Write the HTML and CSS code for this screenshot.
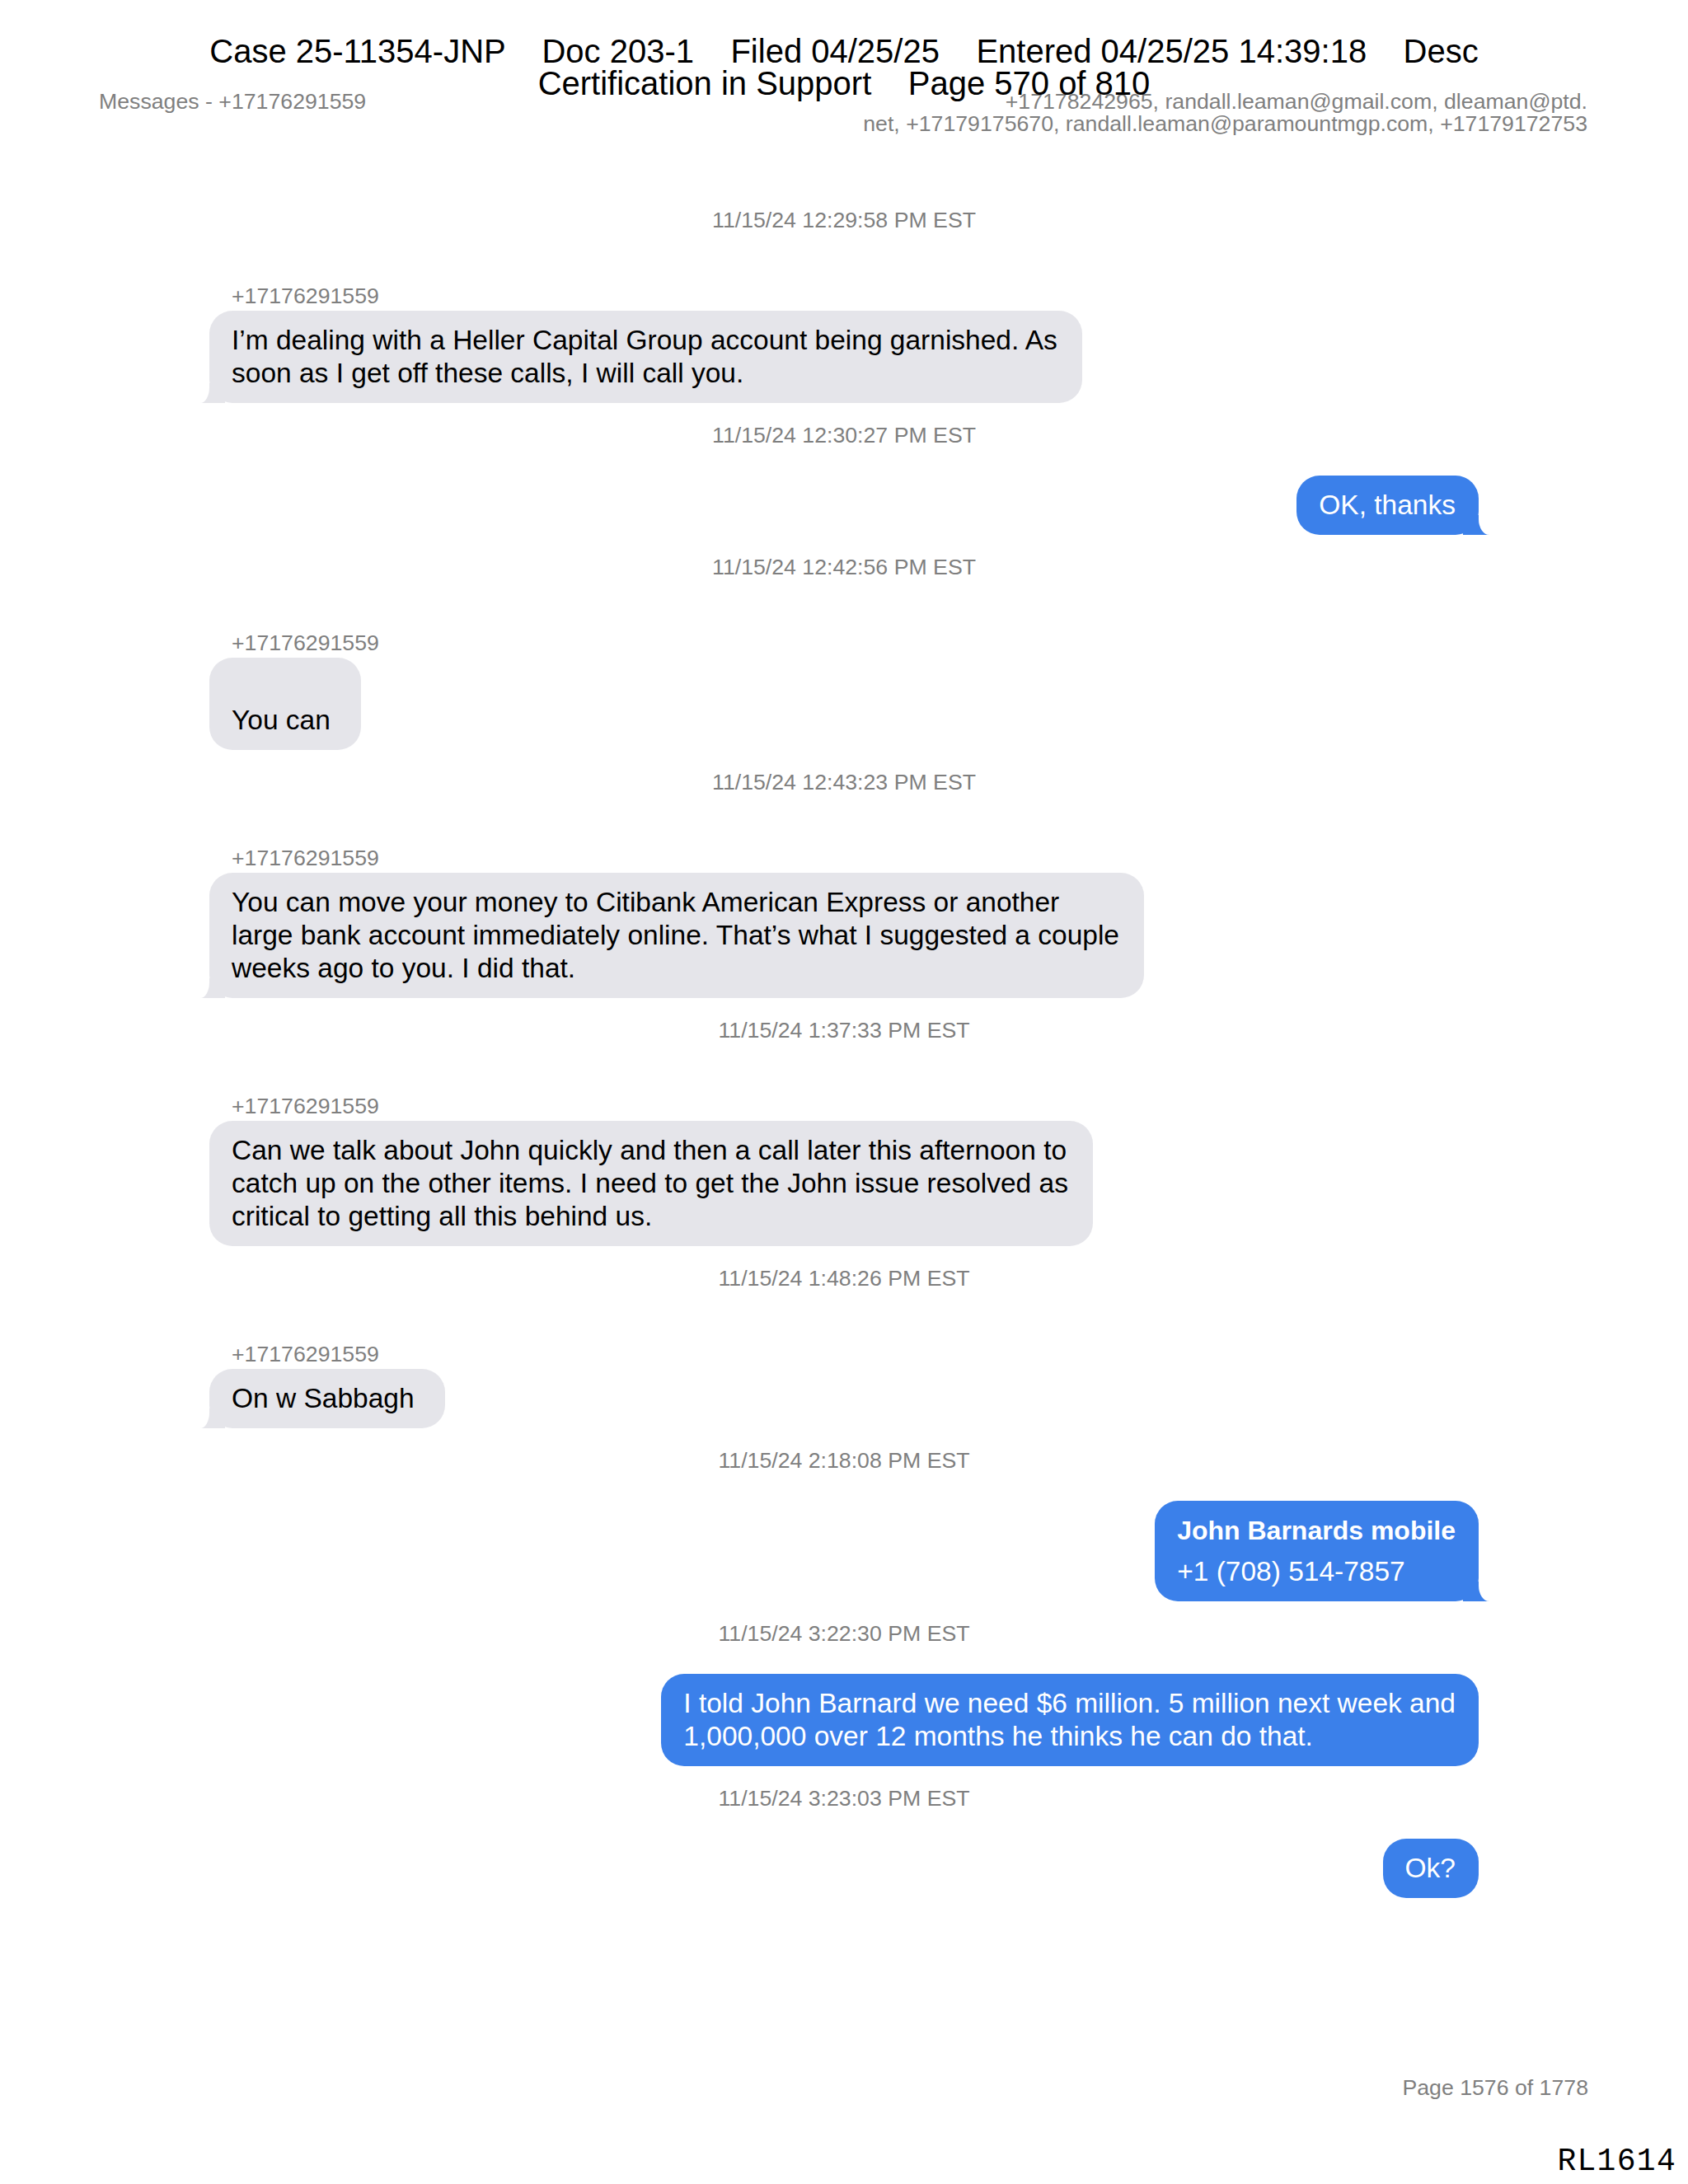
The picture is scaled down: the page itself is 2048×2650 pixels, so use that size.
FILE: index.html
```html
<!DOCTYPE html>
<html lang="en">
<head>
<meta charset="utf-8">
<title>Messages - +17176291559</title>
<link rel="stylesheet" href="styles.css">
</head>
<body>
<div class="page">
  <div class="stamp">
    <div class="stamp-line">Case 25-11354-JNP    Doc 203-1    Filed 04/25/25    Entered 04/25/25 14:39:18    Desc</div>
    <div class="stamp-line">Certification in Support    Page 570 of 810</div>
  </div>

  <header class="doc-header">
    <div class="doc-title">Messages - +17176291559</div>
    <div class="participants">+17178242965, randall.leaman@gmail.com, dleaman@ptd.<br>net, +17179175670, randall.leaman@paramountmgp.com, +17179172753</div>
  </header>

  <main class="thread">
    <div class="ts">11/15/24 12:29:58 PM EST</div>
    <div class="msg in">
      <div class="sender">+17176291559</div>
      <div class="bubble tail">I’m dealing with a Heller Capital Group account being garnished. As<br>soon as I get off these calls, I will call you.</div>
    </div>

    <div class="ts">11/15/24 12:30:27 PM EST</div>
    <div class="msg out">
      <div class="bubble tail">OK, thanks</div>
    </div>

    <div class="ts">11/15/24 12:42:56 PM EST</div>
    <div class="msg in">
      <div class="sender">+17176291559</div>
      <div class="bubble wide-pad">&nbsp;<br>You can</div>
    </div>

    <div class="ts">11/15/24 12:43:23 PM EST</div>
    <div class="msg in">
      <div class="sender">+17176291559</div>
      <div class="bubble tail">You can move your money to Citibank American Express or another<br>large bank account immediately online. That’s what I suggested a couple<br>weeks ago to you. I did that.</div>
    </div>

    <div class="ts">11/15/24 1:37:33 PM EST</div>
    <div class="msg in">
      <div class="sender">+17176291559</div>
      <div class="bubble">Can we talk about John quickly and then a call later this afternoon to<br>catch up on the other items. I need to get the John issue resolved as<br>critical to getting all this behind us.</div>
    </div>

    <div class="ts">11/15/24 1:48:26 PM EST</div>
    <div class="msg in">
      <div class="sender">+17176291559</div>
      <div class="bubble tail wide-pad">On w Sabbagh</div>
    </div>

    <div class="ts">11/15/24 2:18:08 PM EST</div>
    <div class="msg out">
      <div class="bubble tail contact">
        <div class="contact-name">John Barnards mobile</div>
        <div class="contact-phone">+1 (708) 514-7857</div>
      </div>
    </div>

    <div class="ts">11/15/24 3:22:30 PM EST</div>
    <div class="msg out">
      <div class="bubble">I told John Barnard we need $6 million. 5 million next week and<br>1,000,000 over 12 months he thinks he can do that.</div>
    </div>

    <div class="ts">11/15/24 3:23:03 PM EST</div>
    <div class="msg out">
      <div class="bubble">Ok?</div>
    </div>
  </main>

  <footer class="page-foot">
    <div class="pageno">Page 1576 of 1778</div>
    <div class="bates">RL1614</div>
  </footer>
</div>
</body>
</html>
```

FILE: styles.css
```css
* {
  box-sizing: border-box;
}

html, body {
  margin: 0;
  padding: 0;
  background: #ffffff;
}

body {
  font-family: "Liberation Sans", Arial, sans-serif;
  color: #000000;
}

.page {
  position: relative;
  width: 2048px;
  height: 2650px;
  display: flex;
  flex-direction: column;
  overflow: hidden;
}

/* Court filing stamp laid over the page */
.stamp {
  position: absolute;
  top: 43px;
  left: 0;
  width: 100%;
  z-index: 5;
  text-align: center;
  font-size: 40px;
  line-height: 39px;
  color: #000000;
}

.stamp-line {
  white-space: pre;
}

/* Export header */
.doc-header {
  display: flex;
  justify-content: space-between;
  align-items: flex-start;
  padding: 110px 122px 0 120px;
  font-size: 26.7px;
  line-height: 27px;
  color: #7f7f7f;
}

.participants {
  text-align: right;
  white-space: nowrap;
}

/* Conversation */
.thread {
  flex: 1;
  display: flex;
  flex-direction: column;
  padding: 63.5px 254px 0;
}

.ts {
  margin-top: 24px;
  text-align: center;
  font-size: 26.7px;
  line-height: 31px;
  color: #7f7f7f;
}

.msg {
  display: flex;
  flex-direction: column;
}

.msg.in {
  align-self: flex-start;
  margin-top: 61px;
}

.msg.out {
  align-self: flex-end;
  align-items: flex-end;
  margin-top: 33px;
}

.sender {
  padding-left: 27px;
  margin-bottom: 2px;
  font-size: 26.7px;
  line-height: 31px;
  color: #7f7f7f;
  white-space: nowrap;
}

.bubble {
  position: relative;
  z-index: 0;
  width: fit-content;
  border-radius: 28px;
  padding: 16px 28px 16px 27px;
  font-size: 33.5px;
  line-height: 40px;
  white-space: nowrap;
}

.in .bubble {
  background: #e5e5ea;
  color: #000000;
  padding-right: 30px;
}

.in .bubble.wide-pad {
  padding-right: 37px;
}

.out .bubble {
  background: #3b80ea;
  color: #ffffff;
}

/* Bubble tails */
.bubble.tail::before,
.bubble.tail::after {
  content: "";
  position: absolute;
  bottom: 0;
  height: 24px;
  z-index: -1;
}

.in .bubble.tail::before {
  left: -11px;
  width: 30px;
  background: #e5e5ea;
}

.in .bubble.tail::after {
  left: -40px;
  width: 40px;
  background: #ffffff;
  border-bottom-right-radius: 11px 19px;
}

.out .bubble.tail::before {
  right: -13px;
  width: 32px;
  background: #3b80ea;
}

.out .bubble.tail::after {
  right: -40px;
  width: 40px;
  background: #ffffff;
  border-bottom-left-radius: 13px 19px;
}

/* Contact card bubble */
.contact-name {
  font-weight: bold;
  font-size: 32px;
  line-height: 40px;
  margin-bottom: 10px;
}

.contact-phone {
  font-size: 33.5px;
  line-height: 40px;
}

/* Footer */
.page-foot {
  display: flex;
  flex-direction: column;
  align-items: flex-end;
  padding: 0 14px 5.7px 0;
}

.pageno {
  margin-right: 107px;
  margin-bottom: 52px;
  font-size: 26.7px;
  line-height: 31px;
  color: #7f7f7f;
}

.bates {
  font-family: "Liberation Mono", "Courier New", monospace;
  font-size: 38px;
  line-height: 43px;
  letter-spacing: 1.3px;
  color: #000000;
}
```
